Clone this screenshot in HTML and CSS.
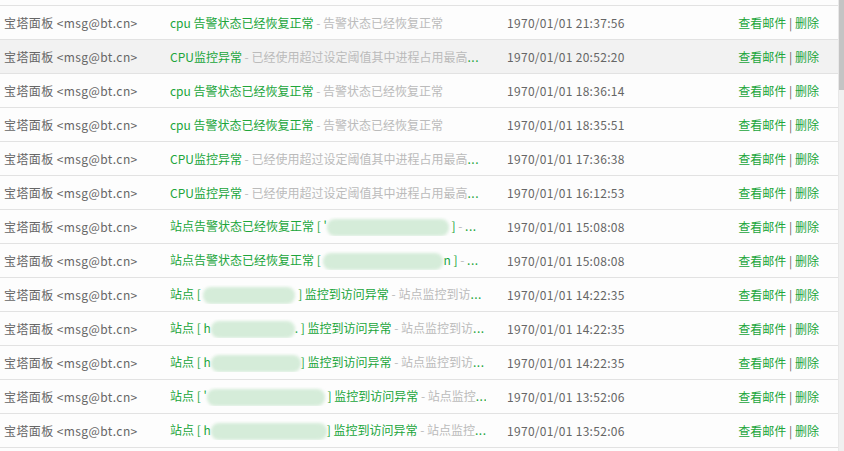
FILE: index.html
```html
<!DOCTYPE html>
<html lang="zh-CN">
<head>
  <meta charset="UTF-8" />
  <meta name="viewport" content="width=device-width, initial-scale=1.0"/>
  <title>邮件列表</title>
  <link rel="stylesheet" href="styles.css">
</head>
<body>

  <div class="mail-page">
    <div class="mail-list">
      <div class="mail-row cut"></div>

      <div class="mail-row">
        <div class="sender">宝塔面板 &lt;msg@bt.cn&gt;</div>
        <div class="subject">cpu 告警状态已经恢复正常<span class="desc"> - 告警状态已经恢复正常</span></div>
        <div class="time">1970/01/01 21:37:56</div>
        <div class="actions"><a href="#">查看邮件</a> | <a href="#">删除</a></div>
      </div>

      <div class="mail-row hover">
        <div class="sender">宝塔面板 &lt;msg@bt.cn&gt;</div>
        <div class="subject">CPU监控异常<span class="desc"> - 已经使用超过设定阈值其中进程占用最高</span><span class="more">...</span></div>
        <div class="time">1970/01/01 20:52:20</div>
        <div class="actions"><a href="#">查看邮件</a> | <a href="#">删除</a></div>
      </div>

      <div class="mail-row">
        <div class="sender">宝塔面板 &lt;msg@bt.cn&gt;</div>
        <div class="subject">cpu 告警状态已经恢复正常<span class="desc"> - 告警状态已经恢复正常</span></div>
        <div class="time">1970/01/01 18:36:14</div>
        <div class="actions"><a href="#">查看邮件</a> | <a href="#">删除</a></div>
      </div>

      <div class="mail-row">
        <div class="sender">宝塔面板 &lt;msg@bt.cn&gt;</div>
        <div class="subject">cpu 告警状态已经恢复正常<span class="desc"> - 告警状态已经恢复正常</span></div>
        <div class="time">1970/01/01 18:35:51</div>
        <div class="actions"><a href="#">查看邮件</a> | <a href="#">删除</a></div>
      </div>

      <div class="mail-row">
        <div class="sender">宝塔面板 &lt;msg@bt.cn&gt;</div>
        <div class="subject">CPU监控异常<span class="desc"> - 已经使用超过设定阈值其中进程占用最高</span><span class="more">...</span></div>
        <div class="time">1970/01/01 17:36:38</div>
        <div class="actions"><a href="#">查看邮件</a> | <a href="#">删除</a></div>
      </div>

      <div class="mail-row">
        <div class="sender">宝塔面板 &lt;msg@bt.cn&gt;</div>
        <div class="subject">CPU监控异常<span class="desc"> - 已经使用超过设定阈值其中进程占用最高</span><span class="more">...</span></div>
        <div class="time">1970/01/01 16:12:53</div>
        <div class="actions"><a href="#">查看邮件</a> | <a href="#">删除</a></div>
      </div>

      <div class="mail-row">
        <div class="sender">宝塔面板 &lt;msg@bt.cn&gt;</div>
        <div class="subject">站点告警状态已经恢复正常 [ '<span class="blur w122"></span> ]<span class="desc"> - </span><span class="more">...</span></div>
        <div class="time">1970/01/01 15:08:08</div>
        <div class="actions"><a href="#">查看邮件</a> | <a href="#">删除</a></div>
      </div>

      <div class="mail-row">
        <div class="sender">宝塔面板 &lt;msg@bt.cn&gt;</div>
        <div class="subject">站点告警状态已经恢复正常 [ <span class="blur w120"></span>n ]<span class="desc"> - </span><span class="more">...</span></div>
        <div class="time">1970/01/01 15:08:08</div>
        <div class="actions"><a href="#">查看邮件</a> | <a href="#">删除</a></div>
      </div>

      <div class="mail-row">
        <div class="sender">宝塔面板 &lt;msg@bt.cn&gt;</div>
        <div class="subject">站点 [ <span class="blur w92"></span> ] 监控到访问异常<span class="desc"> - 站点监控到访</span><span class="more">...</span></div>
        <div class="time">1970/01/01 14:22:35</div>
        <div class="actions"><a href="#">查看邮件</a> | <a href="#">删除</a></div>
      </div>

      <div class="mail-row">
        <div class="sender">宝塔面板 &lt;msg@bt.cn&gt;</div>
        <div class="subject">站点 [ h<span class="blur w84"></span>. ] 监控到访问异常<span class="desc"> - 站点监控到访</span><span class="more">...</span></div>
        <div class="time">1970/01/01 14:22:35</div>
        <div class="actions"><a href="#">查看邮件</a> | <a href="#">删除</a></div>
      </div>

      <div class="mail-row">
        <div class="sender">宝塔面板 &lt;msg@bt.cn&gt;</div>
        <div class="subject">站点 [ h<span class="blur w90"></span>] 监控到访问异常<span class="desc"> - 站点监控到访</span><span class="more">...</span></div>
        <div class="time">1970/01/01 14:22:35</div>
        <div class="actions"><a href="#">查看邮件</a> | <a href="#">删除</a></div>
      </div>

      <div class="mail-row">
        <div class="sender">宝塔面板 &lt;msg@bt.cn&gt;</div>
        <div class="subject">站点 [ '<span class="blur w118"></span> ] 监控到访问异常<span class="desc"> - 站点监控</span><span class="more">...</span></div>
        <div class="time">1970/01/01 13:52:06</div>
        <div class="actions"><a href="#">查看邮件</a> | <a href="#">删除</a></div>
      </div>

      <div class="mail-row">
        <div class="sender">宝塔面板 &lt;msg@bt.cn&gt;</div>
        <div class="subject">站点 [ h<span class="blur w116"></span>] 监控到访问异常<span class="desc"> - 站点监控</span><span class="more">...</span></div>
        <div class="time">1970/01/01 13:52:06</div>
        <div class="actions"><a href="#">查看邮件</a> | <a href="#">删除</a></div>
      </div>

      <div class="mail-row"></div>
    </div>

    <div class="scrollbar">
      <div class="thumb"></div>
    </div>
  </div>

</body>
</html>
```

FILE: styles.css
```css
* {
  margin: 0;
  padding: 0;
  box-sizing: border-box;
}
html, body {
  height: 100%;
  overflow: hidden;
}
body {
  background: #fff;
  font-family: "Noto Sans CJK SC", "Noto Sans", sans-serif;
  font-size: 12px;
  color: #666;
}
.mail-page {
  display: flex;
  height: 100%;
}
.mail-list {
  flex: 1;
  display: flex;
  flex-direction: column;
  background: #fdfdfd;
}
.mail-row {
  display: grid;
  grid-template-columns: 166px 337px 1fr auto;
  align-items: center;
  flex: 0 0 34px;
  height: 34px;
  padding: 0 19px 0 4px;
  border-bottom: 1px solid #e2e2e2;
}
.mail-row.cut {
  flex: 0 0 6px;
  height: 6px;
}
.mail-row.hover {
  background: #f2f2f2;
}
.sender {
  white-space: nowrap;
  letter-spacing: 0.4px;
}
.subject {
  color: #20a53a;
  white-space: nowrap;
  overflow: hidden;
  max-width: 316px;
}
.desc {
  color: #bbb;
}
.more {
  letter-spacing: 0.5px;
}
.blur {
  display: inline-block;
  height: 17px;
  vertical-align: middle;
  background: #d5ecd9;
  border-radius: 8px;
  filter: blur(1.5px);
}
.w84 { width: 84px; }
.w90 { width: 90px; }
.w92 { width: 92px; }
.w116 { width: 116px; }
.w118 { width: 118px; }
.w120 { width: 120px; }
.w122 { width: 122px; }
.time {
  white-space: nowrap;
  letter-spacing: 0.3px;
}
.actions {
  white-space: nowrap;
  text-align: right;
}
.actions a {
  color: #20a53a;
  text-decoration: none;
}
.scrollbar {
  flex: 0 0 6px;
  background: #f0f0f0;
  border-left: 1px solid #e8e8e8;
}
.thumb {
  height: 90px;
  background: #c4c4c4;
}
```
